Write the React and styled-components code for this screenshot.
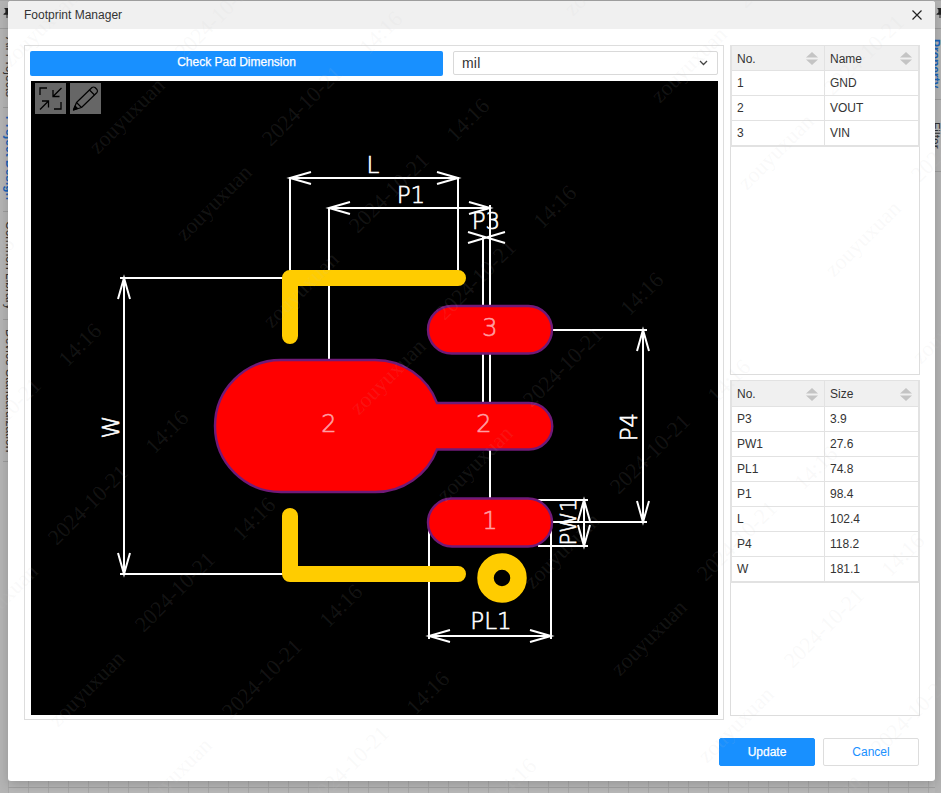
import React from 'react';
import styled, { createGlobalStyle } from 'styled-components';

const Global = createGlobalStyle`
  html, body { margin: 0; padding: 0; background: #b4b4b4; }
  * { box-sizing: border-box; }
`;

const Page = styled.div`
  position: relative;
  width: 941px;
  height: 793px;
  overflow: hidden;
  display: grid;
  grid-template-columns: 8px 927px 6px;
  grid-template-rows: 1px 780px 12px;
  background: #b6b6b6;
  font-family: "Liberation Sans", Arial, sans-serif;
  font-size: 12px;
  color: #333;
`;

const TopEdge = styled.div`
  grid-column: 1 / 4;
  grid-row: 1;
  background: #a4a4a4;
`;

const Rail = styled.div`
  grid-row: 2 / 4;
  grid-column: ${p => p.$col};
  display: flex;
  flex-direction: column;
  overflow: hidden;
  background: #b4b4b4;
`;

const RailTab = styled.div`
  flex: 0 0 ${p => p.$h}px;
  width: 20px;
  border-bottom: 1px solid #9c9c9c;
  padding-top: ${p => p.$pad}px;
  margin-left: ${p => (p.$side === 'right' ? '-7px' : '3px')};
  font-size: 12px;
  writing-mode: vertical-lr;
  white-space: nowrap;
  line-height: 14px;
  color: ${p => (p.$active ? '#1a63b8' : '#333')};
  font-weight: ${p => (p.$active ? 700 : 400)};
`;

const PinBox = styled.div`
  flex: 0 0 28px;
  border-bottom: 1px solid #9c9c9c;
  padding: 6px 0 0 ${p => p.$x}px;
  color: #222;
`;

const BottomEdge = styled.div`
  grid-column: 2;
  grid-row: 3;
  background:
    linear-gradient(#a2a2a2, #a2a2a2) 0 6px / 100% 1px no-repeat,
    repeating-linear-gradient(90deg, #a9a9a9 0 1px, transparent 1px 20px),
    #b8b8b8;
`;

const Dialog = styled.div`
  grid-column: 2;
  grid-row: 2;
  display: flex;
  flex-direction: column;
  background: #fff;
  border-radius: 3px;
  box-shadow: 0 4px 12px rgba(0, 0, 0, 0.18);
  position: relative;
`;

const Header = styled.div`
  flex: 0 0 28px;
  display: flex;
  align-items: center;
  justify-content: space-between;
  padding: 0 12px 0 16px;
  background: #f0f0f0;
  border-radius: 3px 3px 0 0;
  color: #333;
`;

const CloseBtn = styled.button`
  width: 12px;
  height: 12px;
  padding: 0;
  border: 0;
  background: none;
  display: flex;
  color: #222;
`;

const Body = styled.div`
  flex: 0 0 692px;
  display: flex;
  gap: 6px;
  padding: 16px 16px 0;
`;

const LeftPanel = styled.div`
  flex: 0 0 699px;
  height: 675px;
  border: 1px solid #ddd;
  padding: 5px;
  display: flex;
  flex-direction: column;
  gap: 5px;
`;

const ControlRow = styled.div`
  display: flex;
  gap: 10px;
  height: 25px;
`;

const CheckButton = styled.button`
  flex: 0 0 413px;
  height: 25px;
  border: 0;
  border-radius: 2px;
  background: #1890ff;
  color: #fff;
  font: 400 12px "Liberation Sans", Arial, sans-serif;
  -webkit-text-stroke: 0.25px #fff;
  padding: 0 0 4px;
`;

const Select = styled.div`
  flex: 0 0 265px;
  height: 24px;
  border: 1px solid #d9d9d9;
  border-radius: 2px;
  display: flex;
  align-items: center;
  justify-content: space-between;
  padding: 0 9px 0 8px;
  font-size: 14px;
  letter-spacing: 0.2px;
  color: #333;
`;

const Canvas = styled.div`
  position: relative;
  margin-left: 1px;
  width: 687px;
  height: 634px;
  background: #000;
`;

const Tools = styled.div`
  position: absolute;
  left: 4px;
  top: 2px;
  display: flex;
  gap: 4px;
`;

const ToolBtn = styled.div`
  width: 31px;
  height: 31px;
  background: #666;
  display: flex;
`;

const Board = styled.svg`
  display: block;
`;

const Dim = styled.g`
  stroke: #fff;
  stroke-width: 2;
  fill: none;
`;

const Label = styled.text`
  font-family: "DejaVu Sans", sans-serif;
  font-size: ${p => p.$size || 23}px;
  font-weight: 200;
  fill: ${p => (p.$pad ? '#ff9da2' : '#fff')};
  stroke: ${p => (p.$pad ? '#ff9da2' : '#fff')};
  stroke-width: 0.6;
  text-anchor: middle;
  dominant-baseline: central;
`;

const RightCol = styled.div`
  flex: 0 0 190px;
  display: flex;
  flex-direction: column;
  gap: 5px;
`;

const TablePanel = styled.div`
  flex: 0 0 ${p => p.$h}px;
  border: 1px solid #ddd;
`;

const Table = styled.table`
  width: 188px;
  table-layout: fixed;
  border-collapse: collapse;
  outline: 1px solid #e2e2e2;
`;

const Th = styled.th`
  height: ${p => p.$h}px;
  padding: 2px 0 0 5px;
  background: #f0f0f0;
  border: 1px solid #e2e2e2;
  border-top: 0;
  font-weight: 400;
  text-align: left;
  &:first-child { width: 93px; }
`;

const ThInner = styled.div`
  display: flex;
  align-items: center;
  justify-content: space-between;
  padding-right: 6px;
`;

const Td = styled.td`
  height: 25px;
  padding: 0 0 0 5px;
  border: 1px solid #e2e2e2;
`;

const Footer = styled.div`
  display: flex;
  justify-content: flex-end;
  gap: 8px;
  padding: 17px 16px 0 0;
`;

const FootBtn = styled.button`
  width: ${p => p.$w}px;
  height: 28px;
  border-radius: 2px;
  font: 400 12px "Liberation Sans", Arial, sans-serif;
  -webkit-text-stroke: ${p => (p.$primary ? '0.25px #fff' : '0')};
  background: ${p => (p.$primary ? '#1890ff' : '#fff')};
  color: ${p => (p.$primary ? '#fff' : '#1890ff')};
  border: 1px solid ${p => (p.$primary ? '#1890ff' : '#ddd')};
`;

const Watermarks = styled.div`
  position: absolute;
  inset: 0;
  overflow: hidden;
  pointer-events: none;
`;

const Mark = styled.span`
  position: absolute;
  transform: translate(-50%, -50%) rotate(-45deg);
  font-family: "Liberation Serif", serif;
  font-size: 22px;
  white-space: nowrap;
  color: rgba(200, 200, 200, 0.1);
`;

const marks = [];
for (let j = -2; j <= 2; j++) {
  for (let i = -12; i <= 12; i++) {
    const tx = 80 + i * 87 - j * 388;
    const ty = 345 + i * 87 + j * 225;
    [['14:16', 0, 0], ['2024-10-21', 8, 160], ['zouyuxuan', 308, 32]].forEach(([t, dx, dy]) => {
      const x = tx + dx;
      const y = ty + dy;
      if (x > -60 && x < 1000 && y > -60 && y < 850) marks.push({ t, x, y });
    });
  }
}

const SortIcon = () => (
  <svg width="12" height="13" viewBox="0 0 12 13">
    <path d="M6 0 L12 5.5 H0 Z M0 7.5 H12 L6 13 Z" fill="#c4c4c4" />
  </svg>
);

const Head = ({ a, b, h }) => (
  <thead>
    <tr>
      <Th $h={h}><ThInner>{a}<SortIcon /></ThInner></Th>
      <Th $h={h}><ThInner>{b}<SortIcon /></ThInner></Th>
    </tr>
  </thead>
);

const Rows = ({ rows }) => (
  <tbody>
    {rows.map(([a, b]) => (
      <tr key={a}><Td>{a}</Td><Td>{b}</Td></tr>
    ))}
  </tbody>
);

const Pin = () => (
  <svg width="8" height="10" viewBox="0 0 8 10">
    <path d="M1.5 0 H6.5 V1 L5.6 1.6 V4.4 L7.5 6 V6.8 H4.5 V10 H3.5 V6.8 H.5 V6 L2.4 4.4 V1.6 L1.5 1 Z" fill="currentColor" />
  </svg>
);

const ArrowH = ({ x, y, dir }) => <polyline points={`${x - dir * 21},${y - 6} ${x},${y} ${x - dir * 21},${y + 6}`} />;
const ArrowV = ({ x, y, dir }) => <polyline points={`${x - 6},${y - dir * 21} ${x},${y} ${x + 6},${y - dir * 21}`} />;

const PadStroke = { fill: '#ff0000', stroke: '#701a78', strokeWidth: 2.4 };

export default function App() {
  return (
    <Page>
      <Global />
      <TopEdge />
      <Rail $col={1}>
        <PinBox $x={3}><Pin /></PinBox>
        <RailTab $h={79} $pad={8}>All Projects</RailTab>
        <RailTab $h={104} $pad={8} $active>Project Design</RailTab>
        <RailTab $h={108} $pad={9}>Common Library</RailTab>
        <RailTab $h={142} $pad={9}>Device Standardization</RailTab>
      </Rail>
      <Dialog>
        <Header>
          Footprint Manager
          <CloseBtn aria-label="Close">
            <svg width="12" height="12" viewBox="0 0 12 12">
              <path d="M1.5 1.5 L10.5 10.5 M10.5 1.5 L1.5 10.5" stroke="currentColor" strokeWidth="1.2" fill="none" />
            </svg>
          </CloseBtn>
        </Header>
        <Body>
          <LeftPanel>
            <ControlRow>
              <CheckButton>Check Pad Dimension</CheckButton>
              <Select>
                mil
                <svg width="9" height="6" viewBox="0 0 9 6">
                  <path d="M1 1 L4.5 4.5 L8 1" stroke="#444" strokeWidth="1.3" fill="none" />
                </svg>
              </Select>
            </ControlRow>
            <Canvas>
              <Board width="687" height="634" viewBox="31 81 687 634">
                <Dim>
                  {/* L */}
                  <path d="M290 178 H458 M290 177 V272 M458 177 V272" />
                  <ArrowH x={290} y={178} dir={-1} /><ArrowH x={458} y={178} dir={1} />
                  {/* P1 */}
                  <path d="M329 208 H490 M329 208 V362 M490 205 V500" />
                  <ArrowH x={329} y={208} dir={-1} /><ArrowH x={490} y={208} dir={1} />
                  {/* P3 */}
                  <path d="M483 237 V404 M468 232 L505 243 M468 243 L505 232" />
                  {/* W */}
                  <path d="M124 278 V574 M120 278 H284 M120 574 H284" />
                  <ArrowV x={124} y={278} dir={-1} /><ArrowV x={124} y={574} dir={1} />
                  {/* P4 */}
                  <path d="M643 330 V522 M552 330 H647 M552 522 H647" />
                  <ArrowV x={643} y={330} dir={-1} /><ArrowV x={643} y={522} dir={1} />
                  {/* PW1 */}
                  <path d="M584 500 V546 M538 500 H588 M538 546 H588" />
                  <ArrowV x={584} y={500} dir={-1} /><ArrowV x={584} y={546} dir={1} />
                  {/* PL1 */}
                  <path d="M429 636 H551 M429 530 V639 M551 530 V639" />
                  <ArrowH x={429} y={636} dir={-1} /><ArrowH x={551} y={636} dir={1} />
                </Dim>
                <path d="M290 336 V278 H458 M290 516 V574 H458" fill="none" stroke="#ffcc00" strokeWidth="16" strokeLinecap="round" strokeLinejoin="round" />
                <circle cx="502" cy="578" r="16.5" fill="none" stroke="#ffcc00" strokeWidth="16.5" />
                <path d="M281 360 H375 A66 66 0 0 1 437 403 H529 A23 23 0 0 1 529 449.5 H437 A66 66 0 0 1 375 492 H281 A66 66 0 0 1 281 360 Z" {...PadStroke} />
                <rect x="428" y="306" width="124" height="47.5" rx="23.75" {...PadStroke} />
                <rect x="428" y="498.5" width="124" height="48" rx="24" {...PadStroke} />
                <Label x="490" y="328" $pad $size={24}>3</Label>
                <Label x="329" y="424" $pad $size={24}>2</Label>
                <Label x="484" y="424" $pad $size={24}>2</Label>
                <Label x="490" y="521" $pad $size={24}>1</Label>
                <Label x="373" y="165">L</Label>
                <Label x="411" y="195">P1</Label>
                <Label x="486" y="221">P3</Label>
                <Label x="491" y="621">PL1</Label>
                <Label transform="rotate(-90 111 427)" x="111" y="427">W</Label>
                <Label transform="rotate(-90 629 427)" x="629" y="427">P4</Label>
                <Label transform="rotate(-90 569 522)" x="569" y="522" $size={21}>PW1</Label>
              </Board>
              <Tools>
                <ToolBtn>
                  <svg width="31" height="31" viewBox="0 0 31 31" fill="none" stroke="#000" strokeWidth="1.3">
                    <path d="M12 5 H5 V12" />
                    <path d="M19 26 H26 V19" />
                    <path d="M26.5 5 L18 13.5 M18 7 V13.5 H24.5" />
                    <path d="M5 26.5 L13.5 18 M7 18 H13.5 V24.5" />
                  </svg>
                </ToolBtn>
                <ToolBtn>
                  <svg width="31" height="31" viewBox="0 0 31 31" fill="none" stroke="#000" strokeWidth="1.2" strokeLinejoin="round">
                    <path d="M3.5 27 L6.5 19.5 L22 4.5 Q23.5 3.5 25 4.5 L27 6.5 Q28 8 27 9.5 L11.5 24.5 Z" />
                    <path d="M6.5 19.5 L11.5 24.5 M19.5 7 L24.5 12" />
                    <path d="M3.5 27 L5 23 L7.5 25.5 Z" fill="#000" />
                  </svg>
                </ToolBtn>
              </Tools>
            </Canvas>
          </LeftPanel>
          <RightCol>
            <TablePanel $h={330}>
              <Table>
                <Head a="No." b="Name" h={24} />
                <Rows rows={[['1', 'GND'], ['2', 'VOUT'], ['3', 'VIN']]} />
              </Table>
            </TablePanel>
            <TablePanel $h={336}>
              <Table>
                <Head a="No." b="Size" h={25} />
                <Rows rows={[['P3', '3.9'], ['PW1', '27.6'], ['PL1', '74.8'], ['P1', '98.4'], ['L', '102.4'], ['P4', '118.2'], ['W', '181.1']]} />
              </Table>
            </TablePanel>
          </RightCol>
        </Body>
        <Footer>
          <FootBtn $primary $w={96}>Update</FootBtn>
          <FootBtn $w={96}>Cancel</FootBtn>
        </Footer>
      </Dialog>
      <Rail $col={3}>
        <PinBox $x={1}><Pin /></PinBox>
        <RailTab $h={71} $pad={10} $side="right" $active>Property</RailTab>
        <RailTab $h={72} $pad={22} $side="right">Filter</RailTab>
      </Rail>
      <BottomEdge />
      <Watermarks>
        {marks.map(m => (
          <Mark key={`${m.t}${m.x}${m.y}`} style={{ left: m.x, top: m.y }}>{m.t}</Mark>
        ))}
      </Watermarks>
    </Page>
  );
}
